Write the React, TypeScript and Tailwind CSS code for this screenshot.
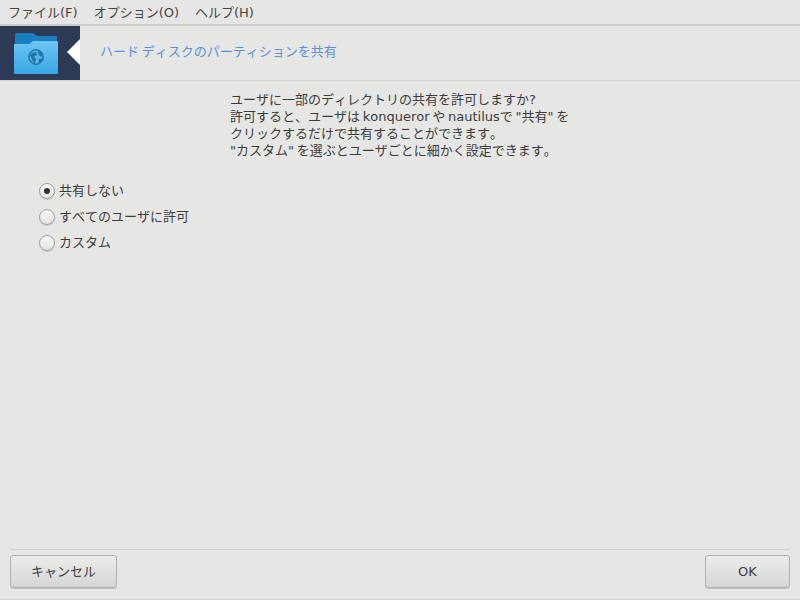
import React from "react";

function Folder() {
  return (
    <svg width="44" height="41" viewBox="0 0 44 41" className="block">
      <defs>
        <linearGradient id="fg" x1="0" y1="0" x2="0" y2="1">
          <stop offset="0" stopColor="#70c5f2" />
          <stop offset="1" stopColor="#38a7e6" />
        </linearGradient>
      </defs>
      <path d="M1 2 Q1 0 3 0 H19 L23 3 H42 Q43 3 43 4 V14 H1 Z" fill="#1a7fbf" />
      <path d="M0 11 H15 L19 8 H43 Q44 8 44 9 V40 Q44 41 43 41 H1 Q0 41 0 40 Z" fill="url(#fg)" />
      <circle cx="22" cy="24" r="7.2" fill="#58b4e8" stroke="#1f74a8" strokeWidth="1.4" />
      <path d="M15.5 22 L19 19.5 L22.5 19 L23 22 L20 23.5 L22 26 L21 30.5 L18.5 28 L17.5 25 Z M24.5 17.5 L28 20 L29 24 L25.5 23 L24 20 Z M25 26 L28.5 25.5 L26.5 30 L24.5 29.5 Z" fill="#1f74a8" />
    </svg>
  );
}

function Radio({ checked, label }: { checked?: boolean; label: string }) {
  return (
    <div className="flex h-[26px] items-center">
      <span className="flex h-4 w-4 items-center justify-center rounded-full border border-[#9e9e9c] bg-gradient-to-b from-[#fafafa] to-[#e2e2e0] shadow-[0_1px_0_#c8c8c6]">
        {checked && <span className="h-[6px] w-[6px] rounded-full bg-[#2e3436]" />}
      </span>
      <span className="ml-1 text-[13px] text-[#3c3c3c]">{label}</span>
    </div>
  );
}

function Btn({ w, label }: { w: string; label: string }) {
  return (
    <button className={`${w} h-[33px] rounded-[3px] border border-[#b0b0ae] bg-gradient-to-b from-[#ececea] to-[#d6d6d4] text-[13px] text-[#3c3c3c] shadow-[0_1px_0_#c4c4c2]`}>
      {label}
    </button>
  );
}

export default function App() {
  return (
    <div
      className="flex h-[600px] w-[800px] flex-col overflow-hidden bg-[#e6e6e4] text-[#3c3c3c] [font-kerning:none] [word-spacing:-1.4px]"
      style={{ fontFamily: '"DejaVu Sans", "Noto Sans CJK JP", sans-serif' }}
    >
      <div className="flex h-6 items-center gap-[16px] pl-2 pt-[1px] text-[13px] text-[#454545]">
        <span>ファイル(F)</span>
        <span>オプション(O)</span>
        <span>ヘルプ(H)</span>
      </div>
      <div className="h-[2px] bg-[#cdcdcb]" />
      <div className="flex h-[55px] items-center border-b border-[#d2d2d0]">
        <div className="relative flex h-[54px] w-20 shrink-0 bg-[#2d3a56] pl-[14px] pt-[7px]">
          <Folder />
          <span className="absolute right-0 top-[13px] h-0 w-0 border-y-[13px] border-r-[13px] border-y-transparent border-r-white" />
        </div>
        <span className="ml-5 -translate-y-px text-[13px] text-[#5a8fdc]">ハード ディスクのパーティションを共有</span>
      </div>
      <div className="ml-[230px] mt-[10px] text-[13px] leading-[17px] text-[#3c3c3c]">
        <div>ユーザに一部のディレクトリの共有を許可しますか?</div>
        <div>許可すると、ユーザは konqueror や nautilusで "共有" を</div>
        <div>クリックするだけで共有することができます。</div>
        <div>"カスタム" を選ぶとユーザごとに細かく設定できます。</div>
      </div>
      <div className="ml-[39px] mt-[19px] flex flex-col">
        <Radio checked label="共有しない" />
        <Radio label="すべてのユーザに許可" />
        <Radio label="カスタム" />
      </div>
      <div className="mx-[10px] mt-auto border-t border-[#d2d2d0] pt-[5px]">
        <div className="flex justify-between">
          <Btn w="w-[107px]" label="キャンセル" />
          <Btn w="w-[85px]" label="OK" />
        </div>
      </div>
      <div className="mt-[11px] h-px bg-[#d2d2d0]" />
    </div>
  );
}
